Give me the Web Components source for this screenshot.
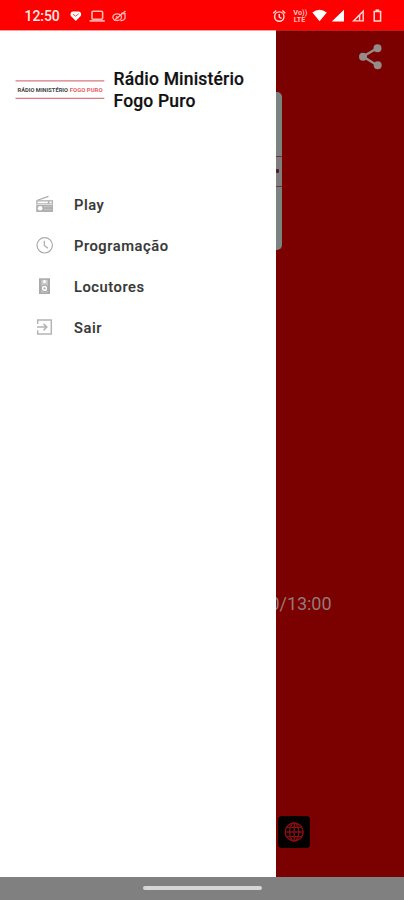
<!DOCTYPE html>
<html lang="pt-BR">
<head>
<meta charset="utf-8">
<meta name="viewport" content="width=device-width">
<title>Rádio Ministério Fogo Puro</title>
<style>
html,body{margin:0;height:100%;overflow:hidden}
body{font-family:Roboto,"Liberation Sans",sans-serif}
</style>
</head>
<body>
<radio-app></radio-app>
<script>
const define = (name, html) => {
  const t = document.createElement('template');
  t.innerHTML = html;
  customElements.define(name, class extends HTMLElement {
    constructor() {
      super();
      this.attachShadow({mode: 'open'}).append(t.content.cloneNode(true));
    }
  });
};

define('status-bar', `
<style>
:host{display:flex;height:30px;box-sizing:border-box;background:#fe0000;color:#ffe9e6;align-items:center;padding:2px 0 0 24.5px}
time{font-size:14px;font-weight:500;width:71.5px;line-height:16px;letter-spacing:-.05px;display:flex;align-items:center}
svg{display:block;flex:none}
</style>
<time>12:50</time>
<svg style="margin-left:-26px" width="56" height="18" viewBox="70 7 56 18" fill="none" stroke="#ffb9b4" stroke-width="1.6">
  <path d="M75.8 21L70.9 15.9C69.8 13.8 71 11.4 73 11.4H78.5C80.6 11.4 81.8 13.8 80.7 15.9Z" fill="#fff" stroke="none"/>
  <path d="M73 14.2L75.5 16.2L78.8 13.8" stroke="#fe4a44" stroke-width="1"/>
  <rect x="92" y="11.3" width="10.6" height="8" rx="1"/><path d="M89.6 20.9H104.8"/>
  <g stroke-width="1.3"><ellipse cx="117.2" cy="17.2" rx="4.3" ry="3.3"/><path d="M114 20.5L125.5 11M121 13.4L125 13.7V18.5Q123.5 21 120.5 20.5M116 16.5L118.5 18.2"/></g>
</svg>
<svg style="margin-left:146px" width="112" height="18" viewBox="272 7 112 18" fill="none" stroke="#ffd8d5" stroke-width="1.4">
  <circle cx="279.3" cy="16.6" r="4.7"/><path d="M279.3 14V17L281.5 18.3M273.3 13.2L276.2 10.6M285.3 13.2L282.4 10.6"/>
  <g fill="#ffc0bb" stroke="none" font-family="Roboto,sans-serif" font-weight="700" font-size="6.5"><text x="293.3" y="15.2" textLength="14" lengthAdjust="spacingAndGlyphs">Vo))</text><text x="293.8" y="21.5" textLength="11.5" lengthAdjust="spacingAndGlyphs">LTE</text></g>
  <path fill="#fff" stroke="none" d="M312.4 12.5Q319.5 6.9 326.8 12.5L319.6 21.2ZM344 9.8V21.6H331.8Z"/>
  <path d="M363.2 11.2V20.9H353.6Z"/><path d="M359.6 15V21" />
  <path d="M374.2 11.5H380.6V21H374.2Z" stroke-width="1.5"/><path d="M375.6 10.2H379.2" stroke-width="1.6"/>
</svg>`);

define('brand-logo', `
<style>:host{display:block;width:90px;height:24px;flex:none}svg{display:block}</style>
<svg width="90" height="24" viewBox="0 0 90 24">
  <path d="M.5 2.8H89.3M.5 20.4H89.3" stroke="#d97983" stroke-width="1.3"/>
  <g font-family="Roboto,sans-serif" font-weight="700" font-size="4.9"><text x="2.5" y="13.5" fill="#444" textLength="50.5" lengthAdjust="spacingAndGlyphs">RÁDIO MINISTÉRIO</text><text x="54.8" y="13.5" fill="#e75c64" textLength="32.7" lengthAdjust="spacingAndGlyphs">FOGO PURO</text></g>
</svg>`);

define('drawer-header', `
<style>
:host{display:flex;align-items:center;height:44px;padding:37px 0 0 14.5px}
h1{font-size:17.5px;line-height:21.5px;font-weight:500;margin:3.4px 0 0 9px;color:#111;white-space:nowrap;letter-spacing:.18px;-webkit-text-stroke:.2px #111}
brand-logo{margin-top:1.4px}
</style>
<brand-logo></brand-logo><h1><slot></slot></h1>`);

define('menu-item', `
<style>
:host{display:flex;align-items:center;height:41px;padding-left:35px;color:#383838;font-size:14.7px;font-weight:500;letter-spacing:.55px;-webkit-text-stroke:.15px #383838}
span{margin-left:19px;line-height:20px}
::slotted(svg){display:block;width:20px;height:20px;flex:none;fill:none;stroke:#aaa;stroke-width:1.2}
</style>
<slot name="icon"></slot><span><slot></slot></span>`);

define('nav-drawer', `
<style>
:host{display:flex;flex-direction:column;background:#fff;width:276px;height:100%}
nav{display:flex;flex-direction:column;margin-top:73.5px}
</style>
<drawer-header>Rádio Ministério<br>Fogo Puro</drawer-header>
<nav>
<menu-item><svg slot="icon" viewBox="0 0 20 20"><path d="M2.4 5.2L13.5 1.4"/><path d="M1.2 5.2H18V17H1.2Z" fill="#b0b0b0" stroke="none"/><path d="M2.5 6.4H12.8V8.3H2.5ZM14.5 6.4H16.7V8.3H14.5Z" fill="#fff" stroke="none"/><path d="M1.5 9.4H17.7" stroke="#eee" stroke-width=".8"/><path d="M9 11.6H16.5M9 14.6H16.5" stroke="#ccc" stroke-width=".7"/><circle cx="5.2" cy="13.2" r="2.3" fill="#fff" stroke="none"/></svg>Play</menu-item>
<menu-item><svg slot="icon" viewBox="0 0 20 20"><circle cx="9.7" cy="9.3" r="7.7"/><path d="M9.3 4.8V9.5L13 12.2"/></svg>Programação</menu-item>
<menu-item><svg slot="icon" viewBox="0 0 20 20"><path d="M4 1.3H15V17H4Z" fill="#aaa" stroke="none"/><path d="M6.3 2.8H12.8V15.5H6.3Z" fill="#ccc" stroke="none"/><circle cx="9.5" cy="4.4" r="1.5" fill="#fff" stroke="none"/><circle cx="9.5" cy="11.4" r="3.2" fill="#fff"/><circle cx="9.5" cy="11.4" r="1.1" fill="#aaa" stroke="none"/></svg>Locutores</menu-item>
<menu-item><svg slot="icon" viewBox="0 0 20 20"><path d="M2.7 6V2.1H16.3V16H2.7V12.2M2 9.1H11.5M8.5 5.8L11.8 9.1L8.5 12.4" stroke="#b4b4b4" stroke-width="1.5"/></svg>Sair</menu-item>
</nav>`);

define('player-page', `
<style>
:host{display:flex;flex-direction:column;height:100%;background:#7b0000;color:#957a76}
svg{display:block}
header{display:flex;justify-content:flex-end;padding:12px 20px 0 0;height:50px}
.cover{width:160px;height:158px;margin-left:122px;border-radius:0 5px 5px 0;background:#7b8380;flex:none;display:flex;flex-direction:column;justify-content:center}
.band{height:29px;background:#7d7f7e;border:solid #7e3038;border-width:1px 0;display:flex;justify-content:flex-end;align-items:center}
.band i{width:3px;height:4px;background:#521c25;margin-right:3px;border-radius:1px}
.hour{font-size:18px;line-height:22px;margin:343px 72.5px 0 0;text-align:right;letter-spacing:-.05px}
.web{width:32px;height:32px;border-radius:4px;background:#040000;margin:200.5px 0 0 278px}
</style>
<header><svg width="28" height="30" viewBox="356 42 28 30" fill="#958c89" stroke="#958c89"><path d="M377.5 48L363 56.5L377.5 65.5" fill="none" stroke-width="2.4"/><g stroke="none"><circle cx="377.5" cy="48.2" r="4"/><circle cx="363" cy="56.7" r="4"/><circle cx="377.7" cy="65.3" r="4"/></g></svg></header>
<div class="cover"><div class="band"><i></i></div></div>
<div class="hour">0/13:00</div>
<div class="web"><svg width="32" height="32" viewBox="0 0 32 32" fill="none" stroke="#850f12" stroke-width="1.4"><circle cx="16.2" cy="16" r="9"/><ellipse cx="16.2" cy="16" rx="4.6" ry="9"/><path d="M16.2 7V25M7.2 16H25.2M8.6 11.4H23.8M8.6 20.6H23.8"/></svg></div>`);

define('gesture-bar', `
<style>:host{display:flex;height:23px;background:#808080;justify-content:center;padding-top:9px;box-sizing:border-box}
i{width:119px;height:4px;border-radius:2px;background:#d6d6d6;margin-left:1px}</style><i></i>`);

define('radio-app', `
<style>
:host{display:grid;grid-template-rows:30px 847px 23px;height:900px;width:404px;overflow:hidden}
main{position:relative;height:847px}
nav-drawer{position:absolute;left:0;top:0}
main::before{content:"";position:absolute;z-index:1;left:0;right:0;top:0;height:1px;background:#ff3b3b80}
</style>
<status-bar></status-bar><main><player-page></player-page><nav-drawer></nav-drawer></main><gesture-bar></gesture-bar>`);
</script>
</body>
</html>
